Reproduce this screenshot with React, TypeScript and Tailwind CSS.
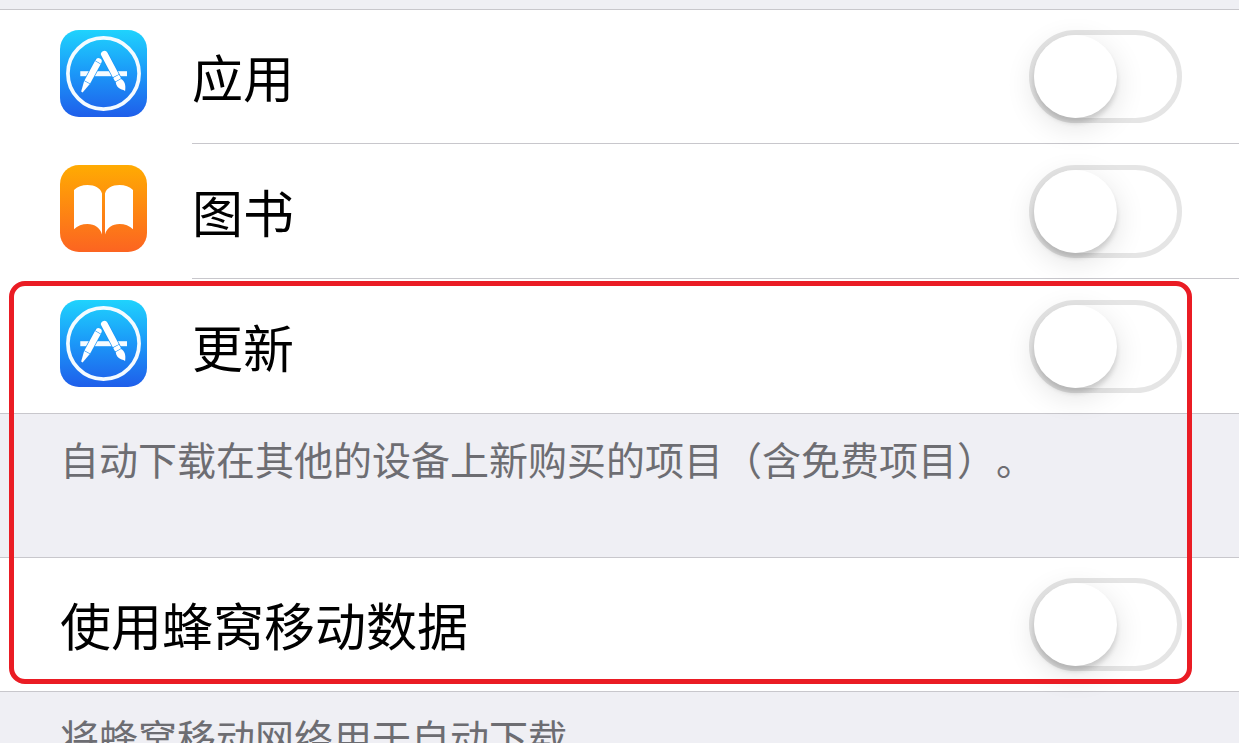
import React, { useState } from 'react';

const AppStoreIcon: React.FC = () => (
  <svg viewBox="0 0 87 87" className="w-[87px] h-[87px] shrink-0" aria-hidden="true">
    <defs>
      <linearGradient id="storeFill" x1="0" y1="0" x2="0" y2="1">
        <stop offset="0" stopColor="#1fd3fd" />
        <stop offset="0.5" stopColor="#1b97f8" />
        <stop offset="1" stopColor="#1f5eea" />
      </linearGradient>
    </defs>
    <rect width="87" height="87" rx="19" fill="url(#storeFill)" />
    <circle cx="43.5" cy="43.5" r="35.6" fill="none" stroke="#f4fbff" strokeWidth="3.7" />
    <rect x="20.3" y="41.2" width="46.7" height="5" fill="#f4fbff" />
    {/* Pencil */}
    <g transform="translate(40 28.6) rotate(28.5)">
      <path d="M-3.9 2h7.8v26h-7.8z" fill="#1a95f6" />
      <path d="M-3.2 4V3.2a3.2 3.2 0 0 1 6.4 0V4z" fill="#fff" />
      <rect x="-3.2" y="4.6" width="6.4" height="22" fill="#fff" />
      <path d="M-3.2 27.3h6.4L.8 38H-.8z" fill="#fff" />
    </g>
    {/* Brush */}
    <g transform="translate(42.8 21.2) rotate(-28)">
      <path d="M-4.1 3h8.2v30h-8.2z" fill="#1a95f6" />
      <path d="M-3.4 27.8V3.4a3.4 3.4 0 0 1 6.8 0v24.400z" fill="#fff" />
      <rect x="-3.4" y="28.400" width="6.8" height="4.200" rx="0.8" fill="#fff" />
      <path d="M-3 33.200h6c2.200 3.200 1.800 7.400-2 12.400-.6-1.300-1.200-1.800-2.800-3.500-2.100-2.700-2.500-5.700-1.200-8.900z" fill="#fff" />
    </g>
  </svg>
);

const BooksIcon: React.FC = () => (
  <svg viewBox="0 0 87 87" className="w-[87px] h-[87px] shrink-0" aria-hidden="true">
    <defs>
      <linearGradient id="booksFill" x1="0" y1="0" x2="0" y2="1">
        <stop offset="0" stopColor="#ffab02" />
        <stop offset="1" stopColor="#fc6421" />
      </linearGradient>
    </defs>
    <rect width="87" height="87" rx="19" fill="url(#booksFill)" />
    <path d="M14 25c3.500-3.300 8-5 13.500-5C35 20 40.500 23 42 28.500v41C40 62.800 34.800 59 27.500 59c-5.300 0-10 1.800-13.500 5.200z" fill="#fff" />
    <path d="M73 25c-3.500-3.300-8-5-13.500-5C52 20 46.500 23 45 28.500v41C47 62.800 52.200 59 59.500 59c5.300 0 10 1.800 13.500 5.200z" fill="#fff" />
  </svg>
);

interface SwitchRowProps {
  id: string;
  label: string;
  icon?: React.ReactNode;
  divider?: boolean;
}

const SwitchRow: React.FC<SwitchRowProps> = ({ id, label, icon, divider }) => {
  const [isOn, setIsOn] = useState(false);

  return (
    <div className="flex h-[135px] pl-[60px]">
      {icon && <div className="w-[132px] shrink-0 pt-[21px]">{icon}</div>}
      <div className={`flex flex-1 items-center justify-between pr-[57px] border-b ${divider ? 'border-[#c8c7cc]' : 'border-transparent'}`}>
        <label htmlFor={id} className="text-[51px] leading-[72px] text-black">
          {label}
        </label>
        <input
          id={id}
          type="checkbox"
          role="switch"
          checked={isOn}
          onChange={(e) => setIsOn(e.target.checked)}
          className="appearance-none shrink-0 w-[153px] h-[93px] rounded-full border-[5px] border-[#e5e5e5] checked:border-[#4cd964] checked:bg-[#4cd964] before:block before:size-[83px] before:rounded-full before:bg-white before:shadow-[0_8px_30px_rgba(0,0,0,0.12),0_5px_5px_rgba(0,0,0,0.14)] checked:before:translate-x-[60px]"
        />
      </div>
    </div>
  );
};

const Section: React.FC<{ children: React.ReactNode }> = ({ children }) => (
  <section className="bg-white shadow-[inset_0_1px_0_#c8c7cc,inset_0_-1px_0_#c8c7cc]">{children}</section>
);

const Footnote: React.FC<{ children: React.ReactNode }> = ({ children }) => (
  <p className="h-[143px] px-[60px] pt-[15px] text-[39px] leading-[58px] text-[#6d6d72] [text-spacing-trim:space-all]">{children}</p>
);

export default function App() {
  return (
    <main className="relative h-screen overflow-hidden bg-[#efeff4] pt-[9px] font-['Noto_Sans_CJK_SC',sans-serif]">
      <Section>
        <SwitchRow id="apps" label="应用" icon={<AppStoreIcon />} divider />
        <SwitchRow id="books" label="图书" icon={<BooksIcon />} divider />
        <SwitchRow id="updates" label="更新" icon={<AppStoreIcon />} />
      </Section>
      <Footnote>自动下载在其他的设备上新购买的项目（含免费项目）。</Footnote>

      <Section>
        <SwitchRow id="cellular" label="使用蜂窝移动数据" />
      </Section>
      <Footnote>将蜂窝移动网络用于自动下载</Footnote>

      {/* Highlight frame around updates and cellular data */}
      <div className="pointer-events-none absolute left-[9px] right-[47px] top-[281px] h-[403px] rounded-2xl border-[5px] border-[#ea1c24]" />
    </main>
  );
}
